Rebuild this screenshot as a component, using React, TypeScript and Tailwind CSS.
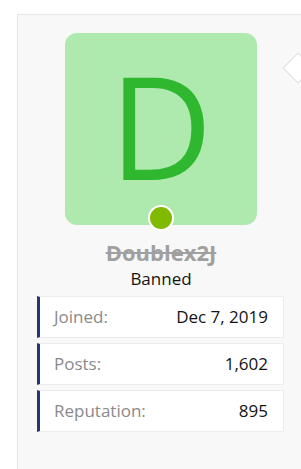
import React from "react";

const rows = [
  { label: "Joined:", value: "Dec 7, 2019" },
  { label: "Posts:", value: "1,602" },
  { label: "Reputation:", value: "895" },
];

export default function App() {
  return (
    <div
      className="w-[301px] h-[469px] bg-white overflow-hidden relative"
      style={{ fontFamily: '"Open Sans", "Noto Sans", sans-serif' }}
    >
      <div className="absolute left-[17px] top-[14px] w-[400px] h-[500px] bg-[#f8f8f8] border-l border-t border-[#e6e6e6]">
        <div className="flex flex-col items-center w-[286px] pt-[18px]">
          <div className="relative w-[192px] h-[192px] rounded-[12px] bg-[#aeeaae] flex items-center justify-center">
            <span className="text-[#2fb82f] text-[142px] leading-none -mt-[8px]">D</span>
            <span className="absolute left-1/2 -translate-x-1/2 bottom-[-6px] w-[26px] h-[26px] rounded-full bg-[#7fb900] border-2 border-white" />
          </div>
          <div className="mt-[14px] text-[22px] font-bold leading-[26px] text-[#a0a0a0] line-through">
            Doublex2J
          </div>
          <div className="text-[17px] leading-[22px] text-[#141414] mt-[3px]">Banned</div>
          <div className="flex flex-col gap-[5px] mt-[6px] w-[247px] ml-[-1px]">
            {rows.map((r) => (
              <div
                key={r.label}
                className="flex justify-between items-center h-[42px] bg-white border border-[#ececec] border-l-[3px] border-l-[#253873] pl-[14px] pr-[15px] text-[17px]"
              >
                <span className="text-[#8a8a8a]">{r.label}</span>
                <span className="text-[#141414]">{r.value}</span>
              </div>
            ))}
          </div>
        </div>
      </div>
      <div className="absolute left-[287px] top-[57px] w-[22px] h-[22px] bg-white border border-[#dcdcdc] rotate-45" />
    </div>
  );
}
